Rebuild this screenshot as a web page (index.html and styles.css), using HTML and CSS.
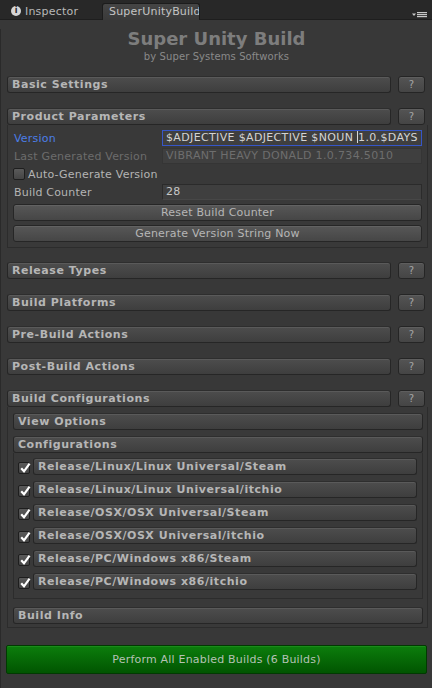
FILE: index.html
```html
<!DOCTYPE html>
<html>
<head>
<meta charset="utf-8">
<link rel="stylesheet" href="styles.css">
</head>
<body>
<div class="tabbar">
  <div class="tab-inactive"><span class="info-icon">i</span><span class="tab-label">Inspector</span></div>
  <div class="tab-active"><span class="tab-label">SuperUnityBuild</span></div>
  <div class="tab-menu">
    <svg width="15" height="6" viewBox="0 0 15 6"><path d="M0 1.5h4l-2 2.5z" fill="#c8c8c8"/><rect x="5" y="0" width="10" height="1.2" fill="#c8c8c8"/><rect x="5" y="2" width="10" height="1.2" fill="#c8c8c8"/><rect x="5" y="4" width="10" height="1.2" fill="#c8c8c8"/></svg>
  </div>
</div>
<div class="panel">
  <div class="title">Super Unity Build</div>
  <div class="subtitle">by Super Systems Softworks</div>

  <div class="frow first"><div class="fbar">Basic Settings</div><div class="help">?</div></div>

  <div class="frow"><div class="fbar">Product Parameters</div><div class="help">?</div></div>
  <div class="box pp">
    <div class="prow"><span class="plabel active">Version</span><div class="field focus">$ADJECTIVE $ADJECTIVE $NOUN <span class="caret"></span>1.0.$DAYS</div></div>
    <div class="prow"><span class="plabel disabled">Last Generated Version</span><div class="field dis">VIBRANT HEAVY DONALD 1.0.734.5010</div></div>
    <div class="prow"><span class="check"></span><span class="checklabel">Auto-Generate Version</span></div>
    <div class="prow"><span class="plabel">Build Counter</span><div class="field">28</div></div>
    <div class="btn">Reset Build Counter</div>
    <div class="btn">Generate Version String Now</div>
  </div>

  <div class="frow after-box"><div class="fbar">Release Types</div><div class="help">?</div></div>
  <div class="frow"><div class="fbar">Build Platforms</div><div class="help">?</div></div>
  <div class="frow"><div class="fbar">Pre-Build Actions</div><div class="help">?</div></div>
  <div class="frow"><div class="fbar">Post-Build Actions</div><div class="help">?</div></div>
  <div class="frow"><div class="fbar">Build Configurations</div><div class="help">?</div></div>
  <div class="box bc">
    <div class="fbar sub">View Options</div>
    <div class="fbar sub gap">Configurations</div>
    <div class="list">
      <div class="item"><span class="check on"><svg width="12" height="12" viewBox="0 0 12 12"><path d="M2.2 6.2L5 9.3L10.6 1.6" fill="none" stroke="#fff" stroke-width="2.2"/></svg></span><div class="fbar ibar">Release/Linux/Linux Universal/Steam</div></div>
      <div class="item"><span class="check on"><svg width="12" height="12" viewBox="0 0 12 12"><path d="M2.2 6.2L5 9.3L10.6 1.6" fill="none" stroke="#fff" stroke-width="2.2"/></svg></span><div class="fbar ibar">Release/Linux/Linux Universal/itchio</div></div>
      <div class="item"><span class="check on"><svg width="12" height="12" viewBox="0 0 12 12"><path d="M2.2 6.2L5 9.3L10.6 1.6" fill="none" stroke="#fff" stroke-width="2.2"/></svg></span><div class="fbar ibar">Release/OSX/OSX Universal/Steam</div></div>
      <div class="item"><span class="check on"><svg width="12" height="12" viewBox="0 0 12 12"><path d="M2.2 6.2L5 9.3L10.6 1.6" fill="none" stroke="#fff" stroke-width="2.2"/></svg></span><div class="fbar ibar">Release/OSX/OSX Universal/itchio</div></div>
      <div class="item"><span class="check on"><svg width="12" height="12" viewBox="0 0 12 12"><path d="M2.2 6.2L5 9.3L10.6 1.6" fill="none" stroke="#fff" stroke-width="2.2"/></svg></span><div class="fbar ibar">Release/PC/Windows x86/Steam</div></div>
      <div class="item"><span class="check on"><svg width="12" height="12" viewBox="0 0 12 12"><path d="M2.2 6.2L5 9.3L10.6 1.6" fill="none" stroke="#fff" stroke-width="2.2"/></svg></span><div class="fbar ibar">Release/PC/Windows x86/itchio</div></div>
    </div>
    <div class="fbar sub info">Build Info</div>
  </div>

  <div class="perform">Perform All Enabled Builds (6 Builds)</div>
</div>
</body>
</html>
```
FILE: styles.css
```css
* { box-sizing: border-box; margin: 0; padding: 0; }
html, body { width: 432px; height: 688px; overflow: hidden; }
body {
  background: #383838;
  font-family: "DejaVu Sans", sans-serif;
  font-size: 11px;
  letter-spacing: 0.2px;
  color: #b4b4b4;
}
.tabbar {
  height: 20px;
  background: #282828;
  border-bottom: 1px solid #1e1e1e;
  display: flex;
  align-items: flex-end;
}
.tab-inactive {
  width: 102px;
  height: 19px;
  display: flex;
  align-items: center;
  padding-left: 11px;
  padding-top: 3px;
  color: #b8b8b8;
}
.info-icon {
  width: 10px;
  height: 10px;
  border-radius: 50%;
  background: #d6d6d6;
  color: #282828;
  font-size: 8px;
  font-weight: bold;
  line-height: 10px;
  text-align: center;
  letter-spacing: 0;
  margin-right: 4px;
}
.tab-active {
  width: 98px;
  height: 17px;
  margin-bottom: -1px;
  background: linear-gradient(#454545, #3a3a3a);
  border: 1px solid #1c1c1c;
  border-bottom: none;
  border-radius: 3px 3px 0 0;
  padding-left: 6px;
  line-height: 15px;
  overflow: hidden;
  white-space: nowrap;
  color: #c4c4c4;
}
.tab-menu {
  margin-left: auto;
  margin-right: 5px;
  align-self: flex-start;
  margin-top: 12px;
  height: 6px;
  display: flex;
}
.panel {
  border-left: 1px solid #2a2a2a;
  height: 668px;
}
.title {
  margin-top: 9px;
  text-align: center;
  font-size: 18px;
  font-weight: bold;
  line-height: 20px;
  letter-spacing: 0;
  color: #7d7d7d;
}
.subtitle {
  margin-top: 2px;
  text-align: center;
  font-size: 10px;
  line-height: 12px;
  letter-spacing: 0.1px;
  color: #8a8a8a;
}
.frow {
  display: flex;
  gap: 7px;
  height: 17px;
  padding: 0 7px 0 6px;
  margin-top: 15px;
}
.frow.first { margin-top: 13px; }
.frow.after-box { margin-top: 14px; }
.fbar {
  flex: 1;
  height: 17px;
  background: linear-gradient(#4d4d4d, #3e3e3e);
  border: 1px solid #262626;
  border-top-color: #2e2e2e;
  border-radius: 3px;
  box-shadow: inset 0 1px 0 #5a5a5a;
  padding-left: 4px;
  font-weight: bold;
  letter-spacing: 0.55px;
  line-height: 15px;
  color: #b6b6b6;
  white-space: nowrap;
  overflow: hidden;
}
.help {
  width: 27px;
  height: 17px;
  background: linear-gradient(#545454, #454545);
  border: 1px solid #252525;
  border-radius: 3px;
  box-shadow: inset 0 1px 0 #5e5e5e;
  text-align: center;
  font-size: 10px;
  line-height: 15px;
  color: #a6a6a6;
}
.box {
  margin-left: 6px;
  width: 421px;
  border: 1px solid #2c2c2c;
  border-top: none;
  background: #393939;
  padding: 5px 5px 5px 5px;
}
.prow {
  display: flex;
  align-items: center;
  height: 16px;
  margin-bottom: 2px;
}
.plabel {
  width: 149px;
  padding-left: 1px;
  color: #b4b4b4;
  white-space: nowrap;
}
.plabel.active { color: #4b7ee8; }
.plabel.disabled { color: #6c6c6c; }
.field {
  flex: 1;
  height: 16px;
  background: #3f3f3f;
  border: 1px solid #2b2b2b;
  border-bottom-color: #474747;
  padding-left: 3px;
  line-height: 14px;
  letter-spacing: 0.35px;
  color: #c8c8c8;
  white-space: nowrap;
  overflow: hidden;
}
.field.focus {
  border: 1px solid #3656c8;
  color: #d4d4d4;
}
.field.dis { color: #6e6e6e; border-color: #353535; }
.caret {
  display: inline-block;
  width: 1px;
  height: 12px;
  background: #d8d8d8;
  vertical-align: -2px;
}
.check {
  width: 12px;
  height: 12px;
  flex: none;
  background: linear-gradient(#5a5a5a, #454545);
  border: 1px solid #1e1e1e;
  border-radius: 2px;
  position: relative;
}
.check svg { position: absolute; left: 0; top: -1px; overflow: visible; }
.checklabel { margin-left: 3px; white-space: nowrap; }
.btn {
  margin-top: 4px;
  height: 17px;
  width: 409px;
  background: linear-gradient(#575757, #464646);
  border: 1px solid #262626;
  border-radius: 3px;
  box-shadow: inset 0 1px 0 #626262;
  text-align: center;
  line-height: 15px;
  color: #b6b6b6;
}
.bc { padding: 6px 5px 3px 5px; }
.fbar.sub { flex: none; width: 410px; }
.fbar.sub.gap { margin-top: 6px; }
.fbar.info { margin-top: 8px; }
.list {
  width: 410px;
  border: 1px solid #2c2c2c;
  border-top: none;
  padding: 5px 5px 8px 4px;
  display: flex;
  flex-direction: column;
  gap: 6px;
}
.item {
  display: flex;
  align-items: center;
  gap: 3px;
  height: 17px;
}
.item .check { margin-top: 2px; }
.ibar { flex: 1; }
.perform {
  margin: 17px 0 0 5px;
  width: 421px;
  height: 29px;
  background: linear-gradient(#0c7d0c, #015501);
  border: 1px solid #013a01;
  border-radius: 2px;
  box-shadow: inset 0 1px 0 #1a8c1a;
  text-align: center;
  line-height: 27px;
  color: #b4c2b4;
}
```
